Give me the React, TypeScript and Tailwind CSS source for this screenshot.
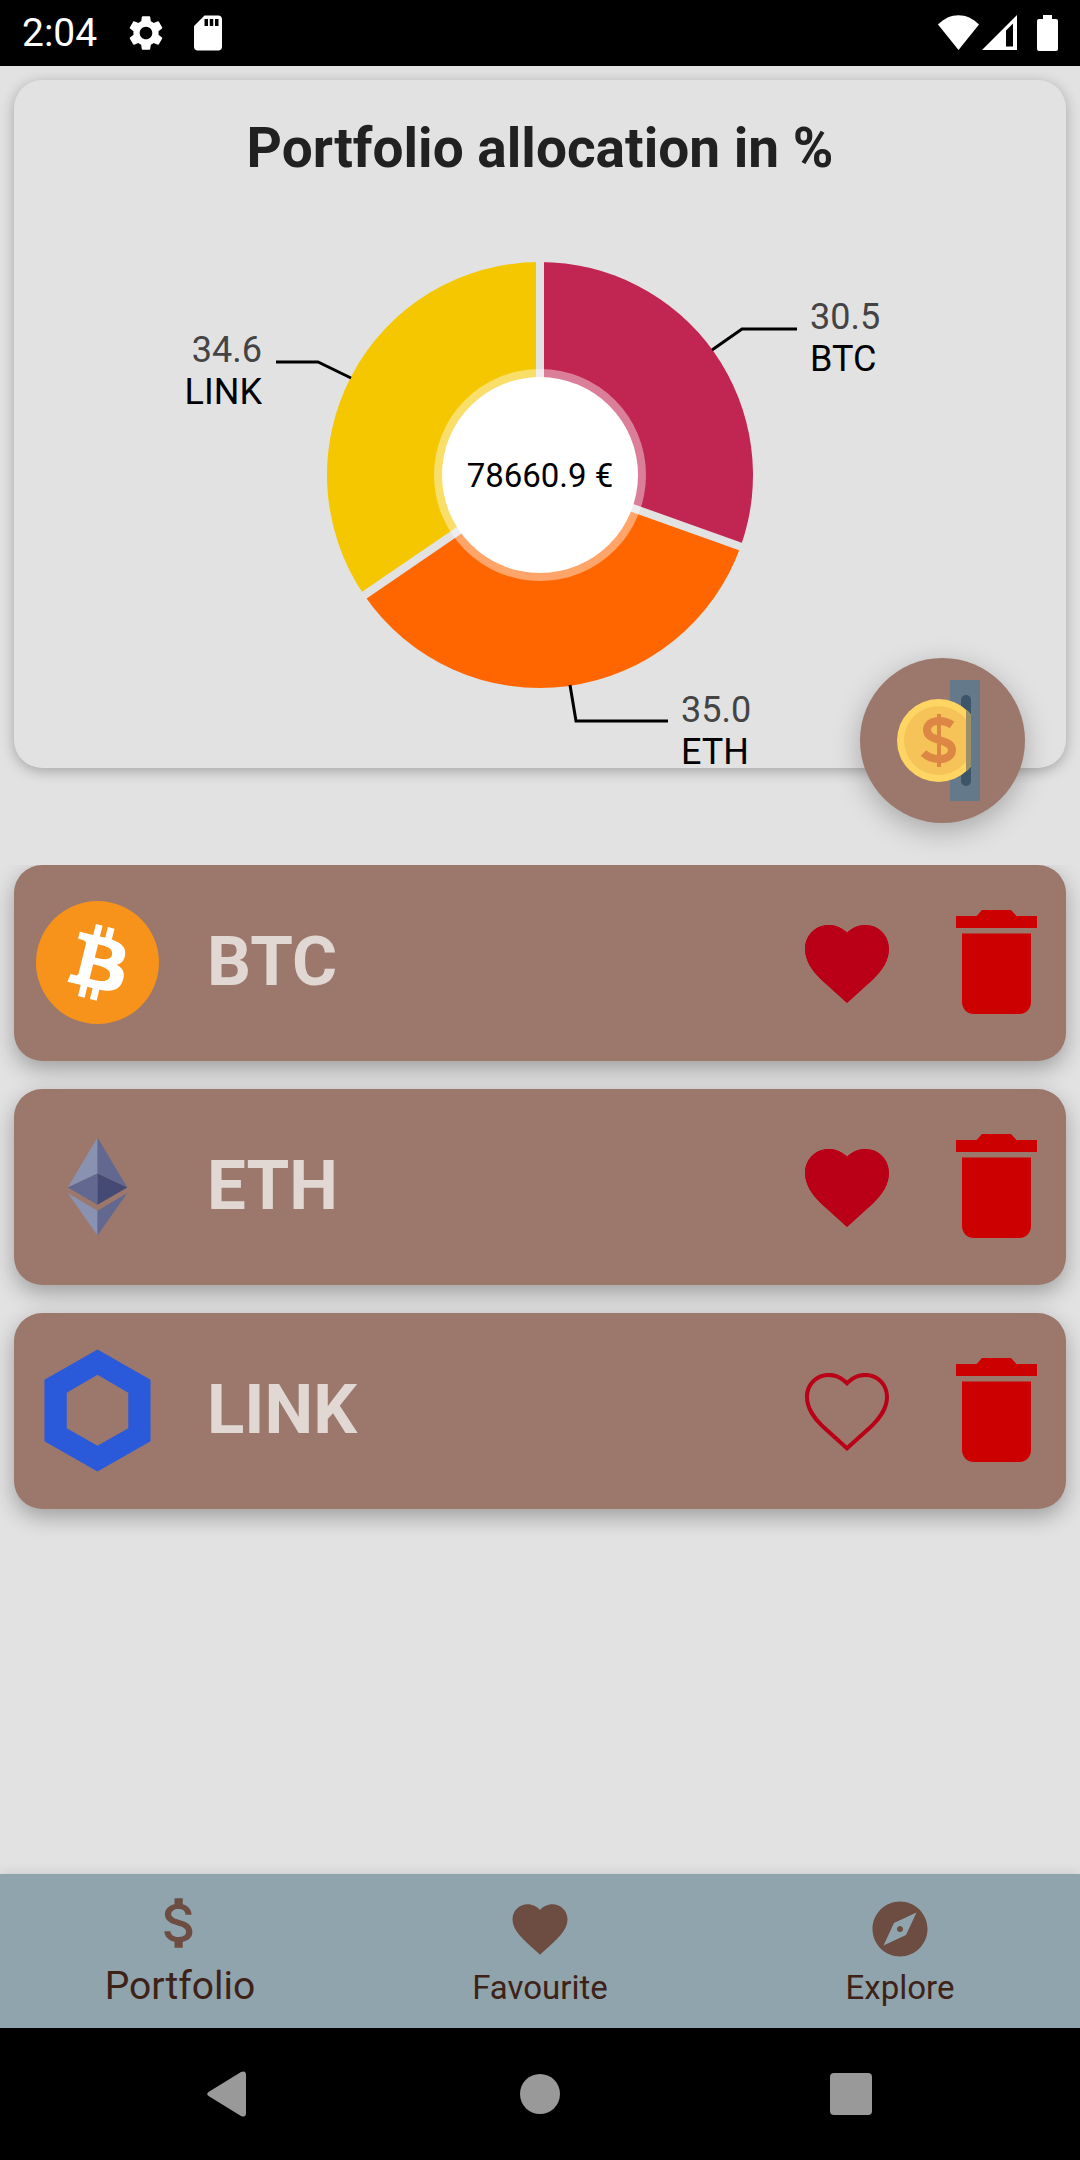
import { MdAttachMoney, MdExplore, MdFavorite, MdSdCard, MdSettings } from "react-icons/md";
import type { ReactNode } from "react";

type Slice = {
  name: string;
  value: string;
  share: number;
  color: string;
  leader: string;
  labelX: number;
  labelY: number;
  anchor: "start" | "end";
};

const slices: Slice[] = [
  { name: "BTC", value: "30.5", share: 0.3045, color: "#c12552", leader: "172,-125 202,-146 257,-146", labelX: 270, labelY: -146, anchor: "start" },
  { name: "ETH", value: "35.0", share: 0.35, color: "#ff6600", leader: "30,210 36,246 128,246", labelX: 141, labelY: 247, anchor: "start" },
  { name: "LINK", value: "34.6", share: 0.3455, color: "#f5c700", leader: "-189,-97 -222,-113 -264,-113", labelX: -278, labelY: -113, anchor: "end" },
];

const RADIUS = 213;

function pointAt(fraction: number, radius: number) {
  const angle = fraction * 2 * Math.PI;
  return `${(Math.sin(angle) * radius).toFixed(2)} ${(-Math.cos(angle) * radius).toFixed(2)}`;
}

function AllocationChart() {
  const starts = slices.map((_, i) => slices.slice(0, i).reduce((sum, s) => sum + s.share, 0));
  return (
    <svg viewBox="-526 -285 1052 578" className="block w-full overflow-visible" role="img" aria-label="Portfolio allocation">
      {slices.map((s, i) => (
        <path
          key={s.name}
          fill={s.color}
          d={`M0 0L${pointAt(starts[i], RADIUS)}A${RADIUS} ${RADIUS} 0 0 1 ${pointAt(starts[i] + s.share, RADIUS)}Z`}
        />
      ))}
      {starts.map((start) => (
        <path key={start} d={`M0 0L${pointAt(start, RADIUS + 2)}`} stroke="#e2e2e2" strokeWidth="8" />
      ))}
      <circle r="106" fill="#fff" fillOpacity="0.41" />
      <circle r="98" fill="#fff" />
      <text y="12" textAnchor="middle" fontSize="33" fill="#000">78660.9 €</text>
      {slices.map((s) => (
        <g key={s.name} fontSize="36" textAnchor={s.anchor}>
          <polyline points={s.leader} fill="none" stroke="#000" strokeWidth="3" />
          <text x={s.labelX} y={s.labelY} fill="#444">{s.value}</text>
          <text x={s.labelX} y={s.labelY + 42} fill="#000">{s.name}</text>
        </g>
      ))}
    </svg>
  );
}

function CoinSlotIcon() {
  return (
    <svg viewBox="0 0 165 165" className="size-full" aria-hidden="true">
      <defs>
        <clipPath id="coin-clip"><rect width="111" height="165" /></clipPath>
        <clipPath id="coin-shape"><circle cx="78.5" cy="82.5" r="41.5" /></clipPath>
      </defs>
      <rect x="90" y="22" width="30" height="121" fill="#64798a" />
      <rect x="101" y="37" width="10" height="91" rx="5" fill="#3c5568" />
      <g clipPath="url(#coin-clip)">
        <circle cx="78.5" cy="82.5" r="41.5" fill="#fed462" />
        <circle cx="78.5" cy="82.5" r="34.5" fill="#f6c358" />
      </g>
      <rect x="106" y="22" width="5" height="121" fill="#9a8f65" clipPath="url(#coin-shape)" />
      <path
        d="M92 67C88 64 83 63 79 63C71 63 67 67 67 72C67 78 73 80 79 82C86 84 92 86 92 92C92 98 86 101 79 101C72 101 67 98.500 63.500 95"
        fill="none"
        stroke="#dc8744"
        strokeWidth="8"
      />
      <rect x="77" y="56" width="4" height="53" fill="#dc8744" />
    </svg>
  );
}

function BitcoinLogo() {
  return (
    <svg viewBox="0 0 32 32" className="size-[123px]" aria-hidden="true">
      <circle cx="16" cy="16" r="16" fill="#f7931a" />
      <path
        fill="#fff"
        d="M23.189 14.02c.314-2.096-1.283-3.223-3.465-3.975l.708-2.84-1.728-.43-.69 2.765c-.454-.114-.92-.22-1.385-.326l.695-2.783L15.596 6l-.708 2.839c-.376-.086-.746-.17-1.104-.26l.002-.009-2.384-.595-.46 1.846s1.283.294 1.256.312c.7.175.826.638.805 1.006l-.806 3.235c.048.012.11.03.18.057l-.183-.045-1.13 4.532c-.086.212-.303.531-.793.41.018.025-1.256-.313-1.256-.313l-.858 1.978 2.25.561c.418.105.828.215 1.231.318l-.715 2.872 1.727.43.708-2.84c.472.127.93.245 1.378.357l-.706 2.828 1.728.43.715-2.866c2.948.558 5.164.333 6.097-2.333.752-2.146-.037-3.385-1.588-4.192 1.13-.26 1.98-1.003 2.207-2.538zm-3.95 5.538c-.533 2.147-4.148.986-5.32.695l.95-3.805c1.172.293 4.929.872 4.37 3.11zm.535-5.569c-.487 1.953-3.495.96-4.47.717l.86-3.45c.975.243 4.118.696 3.61 2.733z"
      />
    </svg>
  );
}

function EthereumLogo() {
  return (
    <svg viewBox="0 0 124 124" className="size-[123px]" aria-hidden="true">
      <path d="M62 12.500L32 63L62 49Z" fill="#8a92b2" />
      <path d="M62 12.500L92 63L62 49Z" fill="#62688f" />
      <path d="M32 63L62 49V80.500Z" fill="#62688f" />
      <path d="M92 63L62 49V80.500Z" fill="#454a75" />
      <path d="M32 68.500L62 86.500V111.500Z" fill="#8a92b2" />
      <path d="M92 68.500L62 86.500V111.500Z" fill="#62688f" />
    </svg>
  );
}

function ChainlinkLogo() {
  return (
    <svg viewBox="0 0 124 124" className="size-[123px]" aria-hidden="true">
      <path
        fillRule="evenodd"
        fill="#2a5ada"
        d="M62 0.500L115.500 31V93L62 123.500L8.500 93V31ZM62 26L31 44V80L62 97.500L93 80V44Z"
      />
    </svg>
  );
}

const HEART =
  "M42 7.500C36.500 2.500 31 0 24 0C10 0 0 10.500 0 24C0 36 7 45.500 16 54.500L42 78L68 54.500C77 45.500 84 36 84 24C84 10.500 74 0 60 0C53 0 47.500 2.500 42 7.500Z";

function Heart({ filled }: { filled: boolean }) {
  return (
    <svg viewBox="0 0 84 78" className="w-[84px]" aria-hidden="true">
      <clipPath id="heart-clip"><path d={HEART} /></clipPath>
      <path
        d={HEART}
        clipPath="url(#heart-clip)"
        fill={filled ? "#b90016" : "none"}
        stroke="#b90016"
        strokeWidth="8"
      />
    </svg>
  );
}

function Trash() {
  return (
    <svg viewBox="0 0 81 104" className="w-[81px]" fill="#cc0000" aria-hidden="true">
      <path d="M0 6H20.500L26 0H55L60.500 6H81V18H0Z" />
      <path d="M6 23.500H75V92C75 98.500 70 104 63.500 104H17.500C11 104 6 98.500 6 92Z" />
    </svg>
  );
}

const coins: { name: string; logo: ReactNode; favourite: boolean }[] = [
  { name: "BTC", logo: <BitcoinLogo />, favourite: true },
  { name: "ETH", logo: <EthereumLogo />, favourite: true },
  { name: "LINK", logo: <ChainlinkLogo />, favourite: false },
];

function StatusBar() {
  return (
    <header className="flex h-[66px] items-center bg-black px-[22px] text-white">
      <span className="text-[39px] leading-[48px]">2:04</span>
      <MdSettings className="ml-7 size-[42px]" />
      <MdSdCard className="ml-5 size-[42px]" />
      <div className="ml-auto flex items-center">
        <svg viewBox="0 0 41 36" className="h-9 w-[41px]" fill="currentColor" aria-label="Wi-Fi">
          <path d="M0 9.500C12 -3 29 -3 41 9.500L20.500 35Z" />
        </svg>
        <svg viewBox="0 0 35 36" className="ml-[3px] h-9 w-[35px]" fill="currentColor" aria-label="Signal">
          <path fillRule="evenodd" d="M0 35L35 0V35ZM24 15.500V31.500H31V8.500Z" />
        </svg>
        <svg viewBox="0 0 21 36" className="ml-5 h-9 w-[21px]" fill="currentColor" aria-label="Battery">
          <path d="M6 0H15V4H19Q21 4 21 6V34Q21 36 19 36H2Q0 36 0 34V6Q0 4 2 4H6Z" />
        </svg>
      </div>
    </header>
  );
}

export default function App() {
  return (
    <div className="flex min-h-screen flex-col bg-[#e2e2e2] font-['Roboto',sans-serif]">
      <StatusBar />
      <main className="flex-1 pt-3.5">
        <section className="relative mx-3.5 rounded-[28px] bg-[#e2e2e2] shadow-[0_3px_14px_rgba(0,0,0,0.28)]">
          <h1 className="pt-9 pb-2.5 text-center text-[55px] leading-16 font-bold text-[#212121]">
            Portfolio allocation in %
          </h1>
          <AllocationChart />
          <button
            type="button"
            aria-label="Add transaction"
            className="absolute right-[41px] -bottom-[55px] size-[165px] rounded-full bg-[#9c786c] shadow-[0_8px_28px_rgba(0,0,0,0.26)]"
          >
            <CoinSlotIcon />
          </button>
        </section>

        <ul className="mt-[97px] flex flex-col gap-7 overflow-hidden px-3.5 pb-12">
          {coins.map((coin) => (
            <li
              key={coin.name}
              className="flex min-h-[196px] items-center rounded-[28px] bg-[#9c786c] pr-[29px] pb-0.5 pl-[22px] shadow-[0_8px_22px_rgba(0,0,0,0.3)]"
            >
              {coin.logo}
              <h2 className="ml-12 flex-1 text-[69px] leading-20 font-bold text-[#e1d8d4]">{coin.name}</h2>
              <button type="button" className="pt-1" aria-pressed={coin.favourite} aria-label={`Favourite ${coin.name}`}>
                <Heart filled={coin.favourite} />
              </button>
              <button type="button" aria-label={`Delete ${coin.name}`} className="ml-[67px]">
                <Trash />
              </button>
            </li>
          ))}
        </ul>
      </main>

      <nav className="grid h-[154px] grid-cols-3 bg-[#90a4ad] text-[#3e2218] shadow-[0_0_12px_rgba(0,0,0,0.12)]">
        <a href="#portfolio" aria-current="page" className="flex flex-col items-center gap-1.5 pt-4 text-[39px] leading-12">
          <MdAttachMoney className="size-[66px] text-[#6d4c41]" />
          Portfolio
        </a>
        <a href="#favourite" className="flex flex-col items-center gap-0.5 pt-[22px] text-[33px] leading-12">
          <MdFavorite className="size-[66px] text-[#6d4c41]" />
          Favourite
        </a>
        <a href="#explore" className="flex flex-col items-center gap-0.5 pt-[22px] text-[33px] leading-12">
          <MdExplore className="size-[66px] text-[#6d4c41]" />
          Explore
        </a>
      </nav>

      <footer className="grid h-[132px] grid-cols-3 place-items-center bg-black px-[73px] text-[#999]">
        <button type="button" aria-label="Back">
          <svg viewBox="0 0 44 46" className="h-[46px] w-11" fill="currentColor">
            <path d="M1.500 21L34 1Q39 -1 39 4V42Q39 47 34 45L1.500 25Q-1 23 1.500 21Z" />
          </svg>
        </button>
        <button type="button" aria-label="Home" className="size-10 rounded-full bg-[#999]" />
        <button type="button" aria-label="Recents" className="size-[42px] rounded-[4px] bg-[#999]" />
      </footer>
    </div>
  );
}
